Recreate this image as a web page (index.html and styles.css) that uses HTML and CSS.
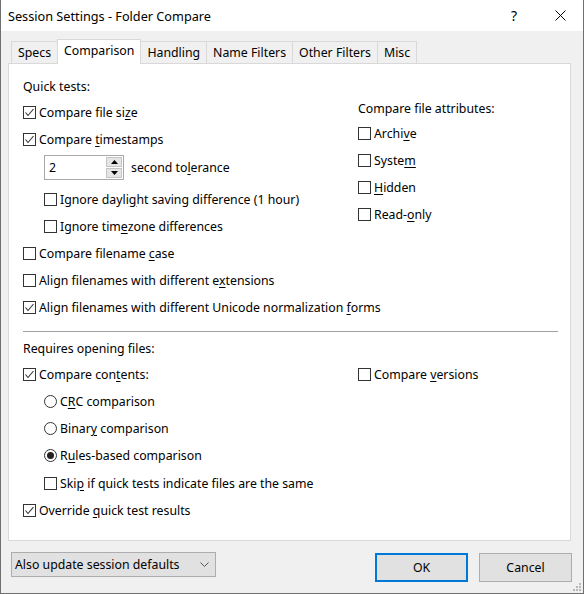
FILE: index.html
```html
<!DOCTYPE html>
<html>
<head>
<meta charset="utf-8">
<link rel="stylesheet" href="styles.css">
</head>
<body>
<div class="window">
  <div class="titlebar">
    <span class="title">Session Settings - Folder Compare</span>
    <span class="cap-btn">?</span>
    <span class="cap-btn"><svg width="11" height="11" viewBox="0 0 11 11"><path d="M0.5 0.5 L10.5 10.5 M10.5 0.5 L0.5 10.5" stroke="#000" stroke-width="1"/></svg></span>
  </div>
  <div class="client">
    <div class="tabs">
      <div class="tab">Specs</div>
      <div class="tab active">Comparison</div>
      <div class="tab">Handling</div>
      <div class="tab">Name Filters</div>
      <div class="tab">Other Filters</div>
      <div class="tab">Misc</div>
    </div>
    <div class="panel">
      <div class="quick">
        <div class="col-left">
          <div class="row h26"><span>Quick tests:</span></div>
          <div class="row h26"><span class="cb"><svg width="11" height="11" viewBox="0 0 11 11"><path d="M1.5 5.5 L4 8.5 L9.5 2" fill="none" stroke="#333" stroke-width="1.1"/></svg></span><span>Compare file si<u>z</u>e</span></div>
          <div class="row h28"><span class="cb"><svg width="11" height="11" viewBox="0 0 11 11"><path d="M1.5 5.5 L4 8.5 L9.5 2" fill="none" stroke="#333" stroke-width="1.1"/></svg></span><span>Compare <u>t</u>imestamps</span></div>
          <div class="row h29 indent">
            <div class="spin">
              <span class="spin-val">2</span>
              <span class="spin-btns">
                <span class="spin-b"><svg width="7" height="4" viewBox="0 0 7 4"><path d="M0 4 L3.5 0 L7 4 Z" fill="#000"/></svg></span>
                <span class="spin-b"><svg width="7" height="4" viewBox="0 0 7 4"><path d="M0 0 L3.5 4 L7 0 Z" fill="#000"/></svg></span>
              </span>
            </div>
            <span class="spin-label">second to<u>l</u>erance</span>
          </div>
          <div class="row h28 indent gap3"><span class="cb"></span><span>Ignore dayli<u>g</u>ht saving difference (1 hour)</span></div>
          <div class="row indent"><span class="cb"></span><span>Ignore tim<u>e</u>zone differences</span></div>
          <div class="row"><span class="cb"></span><span>Compare filename <u>c</u>ase</span></div>
          <div class="row"><span class="cb"></span><span>Align filenames with different e<u>x</u>tensions</span></div>
          <div class="row"><span class="cb"><svg width="11" height="11" viewBox="0 0 11 11"><path d="M1.5 5.5 L4 8.5 L9.5 2" fill="none" stroke="#333" stroke-width="1.1"/></svg></span><span>Align filenames with different Unicode normalization <u>f</u>orms</span></div>
        </div>
        <div class="col-right">
          <div class="row h24"><span>Compare file attributes:</span></div>
          <div class="row"><span class="cb"></span><span>Archi<u>v</u>e</span></div>
          <div class="row"><span class="cb"></span><span>Syste<u>m</u></span></div>
          <div class="row"><span class="cb"></span><span><u>H</u>idden</span></div>
          <div class="row"><span class="cb"></span><span>Read-<u>o</u>nly</span></div>
        </div>
      </div>
      <div class="sep"></div>
      <div class="row h25 gap4"><span>Requires opening files:</span></div>
      <div class="row split">
        <div class="cell"><span class="cb"><svg width="11" height="11" viewBox="0 0 11 11"><path d="M1.5 5.5 L4 8.5 L9.5 2" fill="none" stroke="#333" stroke-width="1.1"/></svg></span><span>Compare con<u>t</u>ents:</span></div>
        <div class="cell"><span class="cb"></span><span>Compare <u>v</u>ersions</span></div>
      </div>
      <div class="row indent"><span class="rb"></span><span>C<u>R</u>C comparison</span></div>
      <div class="row indent"><span class="rb"></span><span>Binar<u>y</u> comparison</span></div>
      <div class="row indent"><span class="rb on"></span><span>R<u>u</u>les-based comparison</span></div>
      <div class="row h28 indent"><span class="cb"></span><span>Ski<u>p</u> if quick tests indicate files are the same</span></div>
      <div class="row"><span class="cb"><svg width="11" height="11" viewBox="0 0 11 11"><path d="M1.5 5.5 L4 8.5 L9.5 2" fill="none" stroke="#333" stroke-width="1.1"/></svg></span><span>Override <u>q</u>uick test results</span></div>
    </div>
    <div class="footer">
      <div class="combo"><span>Also update session defaults</span><svg width="9" height="5" viewBox="0 0 9 5"><path d="M0.5 0.5 L4.5 4.5 L8.5 0.5" fill="none" stroke="#555" stroke-width="1"/></svg></div>
      <div class="buttons">
        <div class="btn default">OK</div>
        <div class="btn">Cancel</div>
      </div>
    </div>
  </div>
  <svg class="grip" width="9" height="9" viewBox="0 0 9 9">
    <rect x="6" y="0" width="2" height="2" fill="#b8b8b8"/>
    <rect x="3" y="3" width="2" height="2" fill="#b8b8b8"/>
    <rect x="6" y="3" width="2" height="2" fill="#b8b8b8"/>
    <rect x="0" y="6" width="2" height="2" fill="#b8b8b8"/>
    <rect x="3" y="6" width="2" height="2" fill="#b8b8b8"/>
    <rect x="6" y="6" width="2" height="2" fill="#b8b8b8"/>
  </svg>
</div>
</body>
</html>
```
FILE: styles.css
```css
* { box-sizing: border-box; }
body {
  margin: 0;
  font-family: "Noto Sans", "Liberation Sans", sans-serif;
  font-size: 12.3px;
  color: #000;
  background: #fff;
}
u { text-decoration: underline; text-underline-offset: 2px; }
.window {
  position: relative;
  width: 584px;
  height: 594px;
  background: #f0f0f0;
  border: 1px solid #6f6f6f;
  border-top: none;
  display: flex;
  flex-direction: column;
}
.titlebar {
  height: 31px;
  background: #fff;
  display: flex;
  align-items: center;
  padding-left: 7px;
  flex: none;
}
.title { flex: 1; font-size: 12.7px; }
.cap-btn {
  width: 46px;
  height: 31px;
  display: flex;
  align-items: center;
  justify-content: center;
  font-size: 14px;
}
.client { flex: 1; display: flex; flex-direction: column; }
.tabs {
  display: flex;
  align-items: flex-end;
  height: 25px;
  margin: 8px 0 -1px 10px;
}
.tab {
  height: 22px;
  margin-bottom: 1px;
  border: 1px solid #d9d9d9;
  border-bottom: none;
  border-right: none;
  padding: 0 6px;
  display: flex;
  align-items: center;
  background: #f0f0f0;
}
.tab:last-child { border-right: 1px solid #d9d9d9; }
.tab.active {
  height: 25px;
  margin-bottom: 0;
  padding-bottom: 3px;
  background: #fff;
  border-right: 1px solid #d9d9d9;
  position: relative;
  z-index: 1;
}
.tab.active + .tab { border-left: none; }
.panel {
  margin-left: 7px;
  width: 563px;
  height: 478px;
  background: #fff;
  border: 1px solid #d9d9d9;
  padding: 9px 12px 0 14px;
  flex: none;
}
.quick { display: flex; }
.col-left { width: 335px; }
.col-right { margin-top: 23px; }
.row {
  display: flex;
  align-items: center;
  height: 27px;
  white-space: nowrap;
}
.h24 { height: 24px; }
.h25 { height: 25px; }
.h26 { height: 26px; }
.h28 { height: 28px; }
.h29 { height: 29px; }
.gap3 { margin-top: 3px; }
.gap4 { margin-top: 4px; }
.indent { padding-left: 21px; }
.cb {
  width: 13px;
  height: 13px;
  border: 1px solid #333;
  background: #fff;
  margin-right: 3px;
  display: flex;
  align-items: center;
  justify-content: center;
  flex: none;
}
.rb {
  width: 13px;
  height: 13px;
  border: 1px solid #333;
  border-radius: 50%;
  background: #fff;
  margin-right: 3px;
  display: flex;
  align-items: center;
  justify-content: center;
  flex: none;
}
.rb.on::after {
  content: "";
  width: 7px;
  height: 7px;
  border-radius: 50%;
  background: #222;
}
.spin {
  width: 80px;
  height: 25px;
  border: 1px solid #a8a8a8;
  background: #fff;
  display: flex;
  align-items: center;
  justify-content: space-between;
  padding: 1px;
}
.spin-val { padding-left: 3px; }
.spin-btns {
  width: 16px;
  height: 21px;
  display: flex;
  flex-direction: column;
  gap: 1px;
}
.spin-b {
  flex: 1;
  background: #e5e5e5;
  border: 1px solid #c4c4c4;
  display: flex;
  align-items: center;
  justify-content: center;
}
.spin-label { margin-left: 7px; }
.sep {
  width: 535px;
  height: 1px;
  background: #a0a0a0;
  margin-top: 10px;
}
.split { display: grid; grid-template-columns: 335px auto; }
.cell { display: flex; align-items: center; }
.footer {
  display: flex;
  align-items: flex-start;
  padding: 11px 11px 0 10px;
}
.combo {
  width: 205px;
  height: 25px;
  border: 1px solid #adadad;
  background: #e1e1e1;
  display: flex;
  align-items: center;
  justify-content: space-between;
  padding: 0 6px 0 3px;
}
.buttons {
  margin-left: auto;
  margin-top: 1px;
  display: flex;
  gap: 11px;
}
.btn {
  width: 93px;
  height: 29px;
  border: 1px solid #adadad;
  background: #e1e1e1;
  display: flex;
  align-items: center;
  justify-content: center;
}
.btn.default { border: 2px solid #0078d7; }
.grip { position: absolute; right: 1px; bottom: 1px; }
```
